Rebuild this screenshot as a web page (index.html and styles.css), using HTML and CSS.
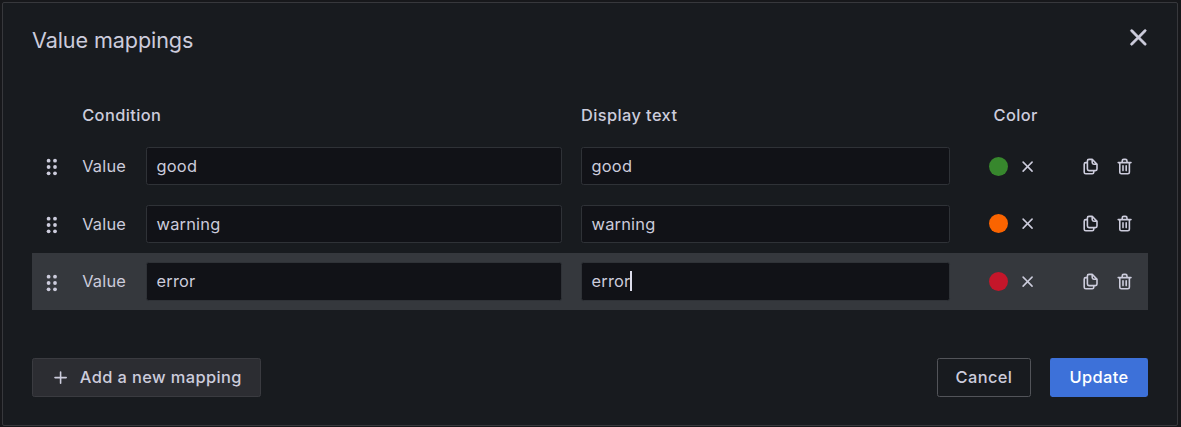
FILE: index.html
```html
<!DOCTYPE html>
<html lang="en">
<head>
<meta charset="utf-8">
<title>Value mappings</title>
<link rel="stylesheet" href="styles.css">
</head>
<body>
<svg class="sprite" aria-hidden="true">
  <symbol id="times" viewBox="0 0 24 24"><path d="M13.41 12l4.9-4.89a1 1 0 0 0-1.42-1.42L12 10.59l-4.89-4.9a1 1 0 0 0-1.42 1.42l4.9 4.89-4.9 4.89a1 1 0 0 0 1.42 1.42l4.89-4.9 4.89 4.9a1 1 0 0 0 1.42-1.42z"/></symbol>
  <symbol id="plus" viewBox="0 0 24 24"><path d="M19 11h-6V5a1 1 0 0 0-2 0v6H5a1 1 0 0 0 0 2h6v6a1 1 0 0 0 2 0v-6h6a1 1 0 0 0 0-2z"/></symbol>
  <symbol id="copy" viewBox="0 0 24 24"><path d="M21,8.94a1.31,1.31,0,0,0-.06-.27l0-.09a1.07,1.07,0,0,0-.19-.28h0l-6-6h0a1.07,1.07,0,0,0-.28-.19.32.32,0,0,0-.09,0A.88.88,0,0,0,14.05,2H10A3,3,0,0,0,7,5V6H6A3,3,0,0,0,3,9V19a3,3,0,0,0,3,3h8a3,3,0,0,0,3-3V18h1a3,3,0,0,0,3-3V9S21,9,21,8.94ZM15,5.41,17.59,8H16a1,1,0,0,1-1-1ZM15,19a1,1,0,0,1-1,1H6a1,1,0,0,1-1-1V9A1,1,0,0,1,6,8H7v7a3,3,0,0,0,3,3h5Zm4-4a1,1,0,0,1-1,1H10a1,1,0,0,1-1-1V5a1,1,0,0,1,1-1h3V7a3,3,0,0,0,3,3h3Z"/></symbol>
  <symbol id="trash" viewBox="0 0 24 24"><path d="M10,18a1,1,0,0,0,1-1V11a1,1,0,0,0-2,0v6A1,1,0,0,0,10,18ZM20,6H16V5a3,3,0,0,0-3-3H11A3,3,0,0,0,8,5V6H4A1,1,0,0,0,4,8H5V19a3,3,0,0,0,3,3h8a3,3,0,0,0,3-3V8h1a1,1,0,0,0,0-2ZM10,5a1,1,0,0,1,1-1h2a1,1,0,0,1,1,1V6H10Zm7,14a1,1,0,0,1-1,1H8a1,1,0,0,1-1-1V8H17Zm-3-1a1,1,0,0,0,1-1V11a1,1,0,0,0-2,0v6A1,1,0,0,0,14,18Z"/></symbol>
  <symbol id="dots" viewBox="0 0 12 18"><circle cx="2.6" cy="2.7" r="1.9"/><circle cx="9" cy="2.7" r="1.9"/><circle cx="2.6" cy="9" r="1.9"/><circle cx="9" cy="9" r="1.9"/><circle cx="2.6" cy="15.3" r="1.9"/><circle cx="9" cy="15.3" r="1.9"/></symbol>
</svg>
<div class="modal">
  <header class="modal-header">
    <h2 class="title">Value mappings</h2>
    <svg class="icon close"><use href="#times"/></svg>
  </header>
  <div class="row head">
    <span></span><span class="label">Condition</span><span></span><span class="label display">Display text</span><span class="label color-label">Color</span>
  </div>
  <div class="row">
    <svg class="grip"><use href="#dots"/></svg><span class="kind">Value</span>
    <div class="input">good</div><div class="input display">good</div>
    <div class="color"><i class="swatch green"></i><svg class="icon"><use href="#times"/></svg></div>
    <div class="actions"><svg class="icon"><use href="#copy"/></svg><svg class="icon"><use href="#trash"/></svg></div>
  </div>
  <div class="row">
    <svg class="grip"><use href="#dots"/></svg><span class="kind">Value</span>
    <div class="input">warning</div><div class="input display">warning</div>
    <div class="color"><i class="swatch orange"></i><svg class="icon"><use href="#times"/></svg></div>
    <div class="actions"><svg class="icon"><use href="#copy"/></svg><svg class="icon"><use href="#trash"/></svg></div>
  </div>
  <div class="row active">
    <svg class="grip"><use href="#dots"/></svg><span class="kind">Value</span>
    <div class="input">error</div><div class="input display">error<i class="caret"></i></div>
    <div class="color"><i class="swatch red"></i><svg class="icon"><use href="#times"/></svg></div>
    <div class="actions"><svg class="icon"><use href="#copy"/></svg><svg class="icon"><use href="#trash"/></svg></div>
  </div>
  <footer class="footer">
    <button class="btn add"><svg class="icon"><use href="#plus"/></svg>Add a new mapping</button>
    <button class="btn cancel">Cancel</button>
    <button class="btn update">Update</button>
  </footer>
</div>
</body>
</html>
```

FILE: styles.css
```css
* { box-sizing: border-box; }
body {
  margin: 0;
  height: 427px;
  padding: 2px 3px 1px 2px;
  overflow: hidden;
  background: #17181b;
  color: #ccccdc;
  font: 16.4px/26px Inter, sans-serif;
  letter-spacing: 0.2px;
}
.sprite { display: none; }
.modal {
  height: 424px;
  padding: 0 29px;
  background: #181b1f;
  border: 1px solid #37383c;
  border-radius: 2px;
}
.modal-header {
  display: flex;
  justify-content: space-between;
  height: 90px;
  padding-top: 20px;
}
.title {
  margin: 4px 0 0;
  font-size: 21.6px;
  font-weight: 400;
  letter-spacing: -0.1px;
}
.icon { display: block; width: 19.2px; height: 19.2px; fill: currentColor; }
.close { width: 28.8px; height: 28.8px; margin-right: -5px; stroke: currentColor; stroke-width: 0.4px; }
.row {
  display: grid;
  grid-template-columns: 50.2px 63.8px 416px 388px 98px 1fr;
  align-items: center;
  height: 57.6px;
}
.head { height: 44.4px; align-items: start; padding-top: 9.4px; }
.label { font-size: 16.4px; font-weight: 500; letter-spacing: 0.4px; white-space: nowrap; }
.color-label { padding-left: 43.5px; }
.active { background: #35383d; }
.grip { width: 12px; height: 18px; margin: 2.4px 0 0 13.7px; fill: currentColor; }
.kind { padding-top: 0.4px; }
.input {
  display: flex;
  align-items: center;
  height: 38.2px;
  padding: 0.4px 9.6px 0;
  background: #111217;
  border: 1px solid #2f3237;
  border-radius: 2.4px;
}
.active .kind { padding: 0 0 0.8px; }
.active .input { height: 38.6px; padding: 0 9.6px 1px; }
.display { margin-left: 19px; }
.caret { width: 2px; height: 20px; margin-left: -0.4px; background: #dcdcea; }
.color { display: flex; align-items: center; gap: 10px; padding-left: 39px; }
.swatch { width: 19.2px; height: 19.2px; border-radius: 50%; }
.green { background: #37872d; }
.orange { background: #fa6400; }
.red { background: #c4162a; }
.actions { display: flex; gap: 15px; padding-left: 32.7px; }
.footer { display: flex; margin-top: 47.6px; }
.btn {
  display: flex;
  align-items: center;
  justify-content: center;
  height: 39px;
  padding: 0;
  border: 1px solid transparent;
  border-radius: 2.4px;
  color: #ccccdc;
  font: 500 16.4px Inter, sans-serif;
  letter-spacing: 0.4px;
}
.add { width: 229px; gap: 9.6px; background: #2c2d32; border-color: #3a3b40; }
.cancel { width: 94px; margin-left: auto; background: transparent; border-color: #525459; }
.update { width: 98px; margin-left: 19px; background: #3d71d9; color: #fff; }
```
